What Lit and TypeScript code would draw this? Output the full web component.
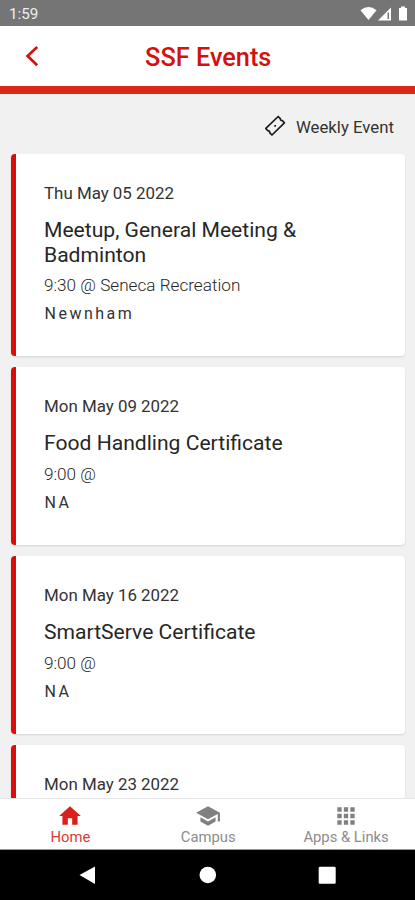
import { LitElement, html, css, svg, nothing } from "lit";
import { customElement, property } from "lit/decorators.js";

interface CampusEvent {
  date: string;
  title?: string;
  time?: string;
  campus?: string;
}

const EVENTS: CampusEvent[] = [
  { date: "Thu May 05 2022", title: "Meetup, General Meeting & Badminton", time: "9:30 @ Seneca Recreation", campus: "Newnham" },
  { date: "Mon May 09 2022", title: "Food Handling Certificate", time: "9:00 @", campus: "NA" },
  { date: "Mon May 16 2022", title: "SmartServe Certificate", time: "9:00 @", campus: "NA" },
  { date: "Mon May 23 2022" },
];

const TABS = [
  { label: "Home", active: true, icon: svg`<path d="M10 20v-6h4v6h5v-8h3L12 3 2 12h3v8z"/>` },
  { label: "Campus", active: false, icon: svg`<path d="M5 13.18v4L12 21l7-3.82v-4L12 17l-7-3.82zM12 3L1 9l11 6 9-4.91V17h2V9L12 3z"/>` },
  { label: "Apps & Links", active: false, icon: svg`<path d="M4 8h4V4H4v4zm6 12h4v-4h-4v4zm-6 0h4v-4H4v4zm0-6h4v-4H4v4zm6 0h4v-4h-4v4zm6-10v4h4V4h-4zm-6 4h4V4h-4v4zm6 6h4v-4h-4v4zm0 6h4v-4h-4v4z"/>` },
];

@customElement("event-card")
export class EventCard extends LitElement {
  @property({ attribute: false }) event!: CampusEvent;

  static styles = css`
    :host {
      display: block;
      box-sizing: border-box;
      flex: none;
      min-height: 177.5px;
      padding: 29.5px 62px 32px 28px;
      border-left: 5.5px solid #db0d0b;
      border-radius: 4px;
      background: #fff;
      box-shadow: 0 1px 2px rgba(0, 0, 0, 0.12);
      color: #333;
    }
    .date {
      font-size: 16.9px;
      line-height: 21px;
    }
    .title {
      margin-top: 14px;
      font-size: 21.1px;
      line-height: 24.5px;
      color: #262626;
    }
    .time {
      margin-top: 7.9px;
      font-size: 17.15px;
      line-height: 21px;
      font-weight: 300;
      color: #262626;
    }
    .campus {
      margin-top: 8px;
      padding-left: 0.5px;
      font-size: 16px;
      line-height: 20px;
      letter-spacing: 2.5px;
    }
  `;

  render() {
    const e = this.event;
    return html`
      <div class="date">${e.date}</div>
      ${e.title ? html`<div class="title">${e.title}</div>` : nothing}
      ${e.time ? html`<div class="time">${e.time}</div>` : nothing}
      ${e.campus ? html`<div class="campus">${e.campus}</div>` : nothing}
    `;
  }
}

@customElement("app-root")
export class AppRoot extends LitElement {
  static styles = css`
    :host {
      display: flex;
      flex-direction: column;
      width: 100%;
      height: 900px;
      overflow: hidden;
      background: #f1f1f1;
      font-family: Roboto, "Liberation Sans", sans-serif;
    }
    svg {
      display: block;
      flex: none;
    }
    .status {
      flex: none;
      height: 25.5px;
      box-sizing: border-box;
      display: flex;
      align-items: center;
      justify-content: space-between;
      padding: 2px 7px 0 9px;
      background: #757575;
      color: #eee;
      font-size: 15.2px;
    }
    .header {
      flex: none;
      box-sizing: border-box;
      height: 68px;
      display: grid;
      grid-template-columns: 60px 1fr 58.5px;
      align-items: center;
      background: #fff;
      border-bottom: 8.5px solid #da2819;
      color: #d3110d;
    }
    .back {
      margin-left: 20px;
    }
    .heading {
      padding-top: 4px;
      text-align: center;
      font-size: 25.3px;
      line-height: 28px;
      font-weight: 500;
    }
    .filter {
      flex: none;
      display: flex;
      align-items: center;
      justify-content: flex-end;
      gap: 9px;
      height: 60px;
      box-sizing: border-box;
      padding: 6px 21px 0 0;
      color: #333;
      font-size: 16.8px;
    }
    .ticket {
      margin-top: -2px;
    }
    .list {
      flex: 1;
      min-height: 0;
      overflow: hidden;
      display: flex;
      flex-direction: column;
      gap: 11px;
      padding: 0 10px 0 11px;
    }
    .tabs {
      flex: none;
      box-sizing: border-box;
      height: 52px;
      display: grid;
      grid-template-columns: repeat(3, 1fr);
      padding-left: 1.5px;
      background: #fff;
      border-top: 1px solid #e6e6e6;
      border-bottom: 1px solid #999;
    }
    .tab {
      display: flex;
      flex-direction: column;
      align-items: center;
      padding-top: 4px;
      color: #8c8c8c;
      fill: #808080;
      font-size: 14.8px;
      line-height: 17px;
    }
    .tab.active {
      color: #dc3a34;
      fill: #d9201a;
    }
    .system {
      flex: none;
      height: 50px;
      background: #000;
    }
  `;

  render() {
    return html`
      <div class="status">
        <span>1:59</span>
        <svg width="48" height="16" viewBox="0 0 48 16" fill="#fff">
          <path d="M0.5 4.2Q8.5-2.2 16.5 4.2L8.5 14z" />
          <path d="M31 1.5V14.5H18z" />
          <path d="M27.5 6.5H29V13H27.5z" fill="#757575" />
          <path d="M39 2h2V.5h4V2h2v12.5h-8z" />
        </svg>
      </div>
      <div class="header">
        <svg class="back" width="24" height="28" viewBox="0 0 24 28" fill="none" stroke="#d3110d" stroke-width="2.7">
          <path d="M17.2 5L7.6 14 17.2 23.2" />
        </svg>
        <div class="heading">SSF Events</div>
      </div>
      <div class="filter">
        <svg class="ticket" width="24" height="24" viewBox="0 0 24 24" fill="none" stroke="#1c1c1c" stroke-width="1.7" stroke-linejoin="round">
          <path d="M2.8 14.4L15.2 2.5 17.3 4.6Q17.4 6.8 19.4 6.7L21.4 8.8 9 21 6.8 18.8Q6.7 16.7 4.8 16.7z" />
          <path d="M11.3 11.8h1.7" />
        </svg>
        <span>Weekly Event</span>
      </div>
      <div class="list">
        ${EVENTS.map((e) => html`<event-card .event=${e}></event-card>`)}
      </div>
      <div class="tabs">
        ${TABS.map(
          (t) => html`<div class="tab ${t.active ? "active" : ""}">
            <svg width="26" height="26" viewBox="0 0 24 24">${t.icon}</svg>
            <span>${t.label}</span>
          </div>`,
        )}
      </div>
      <svg class="system" width="415" height="50" viewBox="0 0 415 50" fill="#fff">
        <path d="M79.5 25L95 16.5V34z" />
        <circle cx="207.8" cy="25" r="8.3" />
        <rect x="318.7" y="16.8" width="17" height="17" rx="1.2" />
      </svg>
    `;
  }
}
